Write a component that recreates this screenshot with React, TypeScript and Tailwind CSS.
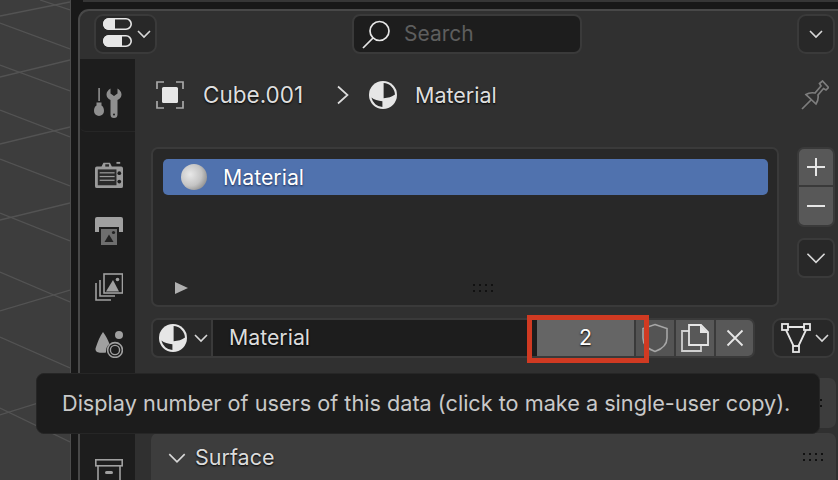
const falling = [[40,0,70,10],[0,23,70,49],[0,65,70,91],[0,110,70,137],[0,159,70,186],[0,213,70,241],[0,272,70,302],[0,337,70,368],[0,408,70,442]];
const rising = [[0,16,70,2],[0,77,70,60],[0,144,70,127],[0,220,70,203],[0,311,70,290],[0,415,70,393]];

function Viewport() {
  return (
    <div className="w-[71px] h-full shrink-0 bg-[#3d3d3d] border-r border-[#4c4c4c]">
      <svg width="70" height="480" viewBox="0 0 70 480" className="block">
        {[...falling, ...rising].map(([a, b, c, d], i) => (
          <line key={i} x1={a} y1={b} x2={c} y2={d} stroke="#535353" strokeWidth="1.3" />
        ))}
      </svg>
    </div>
  );
}

function Chevron({ size = 14, color = "#d8d8d8", width = 1.6 }: { size?: number; color?: string; width?: number }) {
  return (
    <svg width={size} height={size} viewBox="0 0 14 14" fill="none" className="shrink-0">
      <path d="M1 4l6 6 6-6" stroke={color} strokeWidth={width * 14 / size} />
    </svg>
  );
}

function MaterialIcon({ size = 28 }: { size?: number }) {
  return (
    <svg width={size} height={size} viewBox="0 0 28 28" className="block shrink-0">
      <circle cx="14" cy="14" r="14" fill="#e6e6e6" />
      <path d="M14.6 2.1A12 12 0 0 1 26 13.6C23 16 19 17 14.6 17.3Z" fill="#2a2a2a" />
      <path d="M13.4 20.3C9 20 5 18.6 2.4 16.6A12 12 0 0 0 13.4 26Z" fill="#2a2a2a" />
    </svg>
  );
}

function ToolsIcon() {
  return (
    <svg width="30" height="30" viewBox="0 0 30 30" fill="#8f8f8f" className="block">
      <rect x="4.3" y="0" width="1.6" height="13" />
      <path d="M2.5 14.5H7.5V17.5C9 18.5 10 20 10 23A5 5 0 0 1 0 23C0 20 1 18.5 2.5 17.5Z" />
      <path d="M17 .5V5.5L20.5 8 24 5.5V.5C26.5 2 28 4 28 6.5 28 9 26.5 11 24 12V26.5A3.5 3.5 0 0 1 17 26.5V12C14.5 11 13 9 13 6.5 13 4 14.5 2 17 .5Z" transform="translate(-.5 0)" />
      <circle cx="20" cy="26.5" r="1" fill="#1d1d1d" />
    </svg>
  );
}

function RenderIcon() {
  return (
    <svg width="28" height="28" viewBox="0 0 30 28" fill="#9a9a9a" className="block">
      <rect x="23" y="0" width="4" height="2" />
      <path d="M2 5H7L9 1H16L18 5H28A2 2 0 0 1 30 7V26A2 2 0 0 1 28 28H2A2 2 0 0 1 0 26V7A2 2 0 0 1 2 5Z" />
      <rect x="11" y="2.5" width="4" height="2.5" fill="#2a2a2a" />
      <rect x="3" y="8" width="20" height="17" fill="#2a2a2a" />
      <g fill="#9a9a9a"><rect x="5" y="11" width="16" height="1.3" /><rect x="5" y="15" width="16" height="1.3" /><rect x="5" y="19" width="16" height="1.3" /></g>
      <circle cx="26" cy="12" r="2" fill="#1d1d1d" />
      <circle cx="26" cy="21" r="2" fill="#1d1d1d" />
    </svg>
  );
}

function OutputIcon() {
  return (
    <svg width="28" height="28" viewBox="0 0 28 28" className="block">
      <path d="M2 0H26A2 2 0 0 1 28 2V15H24V10H4V15H0V2A2 2 0 0 1 2 0Z" fill="#a0a0a0" />
      <rect x="6" y="12" width="16" height="16" fill="#6e6e6e" />
      <path d="M9.5 25L14 17.5 18.5 25Z" fill="#222" />
      <circle cx="18.5" cy="15.5" r="1.6" fill="#222" />
    </svg>
  );
}

function ImageIcon() {
  return (
    <svg width="28" height="28" viewBox="0 0 28 28" fill="none" className="block">
      <rect x="9" y="1" width="18.5" height="19" fill="#1d1d1d" stroke="#a0a0a0" strokeWidth="1.6" />
      <path d="M11 18.5L18 7 24 18.5Z" fill="#a0a0a0" />
      <circle cx="22.5" cy="6.5" r="1.8" fill="#a0a0a0" />
      <path d="M5 7V23H20" stroke="#a0a0a0" strokeWidth="1.6" />
      <path d="M1 10V27H16" stroke="#a0a0a0" strokeWidth="1.6" />
    </svg>
  );
}

function ShapesIcon() {
  return (
    <svg width="28" height="29" viewBox="0 0 28 29" fill="none" className="block">
      <circle cx="24" cy="6" r="4" fill="#a0a0a0" />
      <path d="M8 3C11 7 13 11 14.5 15 12 17 11 19 11 23.5 9 24 5 24 2 23 .5 22 0 20 1 18 3 12 5 7 8 3Z" fill="#a0a0a0" />
      <circle cx="20" cy="21" r="7.4" stroke="#a0a0a0" strokeWidth="1.6" />
      <circle cx="20" cy="21" r="4.6" stroke="#a0a0a0" strokeWidth="1.4" />
    </svg>
  );
}

function ArchiveIcon() {
  return (
    <svg width="28" height="24" viewBox="0 0 28 24" fill="none" stroke="#a0a0a0" strokeWidth="1.6" className="block">
      <rect x=".8" y=".8" width="26.4" height="6" />
      <path d="M3 7V24M25 7V24" />
      <rect x="10" y="12" width="8" height="3" rx="1.5" fill="#a0a0a0" stroke="none" />
    </svg>
  );
}

function SideTab({ children, className }: { children: React.ReactNode; className: string }) {
  return <div className={`flex justify-center items-center shrink-0 ${className}`}>{children}</div>;
}

function Sidebar() {
  return (
    <div className="w-[55px] shrink-0 bg-[#1d1d1d] flex flex-col">
      <SideTab className="h-[73px] pl-[3px] pt-[15px] border-b border-[#262626] rounded-bl-[6px]">
        <ToolsIcon />
      </SideTab>
      <SideTab className="mt-[29px] h-[28px] pl-[2px]"><RenderIcon /></SideTab>
      <SideTab className="mt-[28px] h-[28px] pl-[2px]"><OutputIcon /></SideTab>
      <SideTab className="mt-[28px] h-[28px] pl-[2px]"><ImageIcon /></SideTab>
      <SideTab className="mt-[28px] h-[29px] pl-[2px]"><ShapesIcon /></SideTab>
      <SideTab className="mt-[101px] h-[24px] pl-[2px]"><ArchiveIcon /></SideTab>
    </div>
  );
}

function Grip({ className = "" }: { className?: string }) {
  return (
    <div className={`grid grid-cols-4 gap-x-[4px] gap-y-[4px] w-[20px] shrink-0 ${className}`}>
      {Array.from({ length: 8 }).map((_, i) => (
        <span key={i} className="w-[2px] h-[2px] bg-[#111111]" />
      ))}
    </div>
  );
}

function ListBox() {
  return (
    <div className="flex-1 h-[160px] rounded-[7px] border-2 border-[#3a3a3a] bg-[#282828] pl-[10px] pr-[9px] pt-[10px] flex flex-col">
      <div className="h-[36px] shrink-0 rounded-[5px] bg-[#5072ae] flex items-center pl-[18px]">
        <div className="w-[26px] h-[26px] rounded-full bg-[radial-gradient(circle_at_35%_40%,#e8e8e8_0%,#c4c4c4_50%,#6a6a6a_100%)]" />
        <span className="ml-[16px] pt-[1px] text-[21.3px] text-white [text-shadow:0_1px_2px_#1a2a50]">Material</span>
      </div>
      <div className="mt-auto mb-[11px] flex items-center relative h-[12px]">
        <svg width="13" height="12" viewBox="0 0 13 12" className="ml-[12px]"><path d="M0 0L13 6 0 12Z" fill="#b0b0b0" /></svg>
        <Grip className="ml-[285px]" />
      </div>
    </div>
  );
}

function SideButtons() {
  return (
    <div className="w-[38px] ml-[18px] shrink-0 flex flex-col">
      <div className="h-[80px] rounded-[7px] border-2 border-[#3a3a3a] bg-[#585858] flex flex-col">
        <div className="h-[38px] flex items-center justify-center border-b-2 border-[#3a3a3a]">
          <svg width="20" height="20" viewBox="0 0 20 20"><path d="M10 1V19M1 10H19" stroke="#e6e6e6" strokeWidth="2" /></svg>
        </div>
        <div className="flex-1 flex items-center justify-center">
          <svg width="20" height="4" viewBox="0 0 20 4"><path d="M1 2H19" stroke="#e6e6e6" strokeWidth="2" /></svg>
        </div>
      </div>
      <div className="mt-[11px] h-[40px] rounded-[7px] border-2 border-[#3a3a3a] bg-[#282828] flex items-center justify-center">
        <Chevron size={20} width={1.6} />
      </div>
    </div>
  );
}

function MaterialRow() {
  return (
    <div className="flex h-[40px] shrink-0 mt-[11px] mr-[3px] text-[#dcdcdc]">
      <div className="w-[62px] shrink-0 rounded-l-[7px] border-2 border-[#3a3a3a] bg-[#282828] flex items-center pl-[6px] gap-[7px]">
        <MaterialIcon />
        <Chevron size={14} />
      </div>
      <div className="w-[324px] shrink-0 bg-[#1d1d1d] border-y-2 border-[#3a3a3a] flex items-center pl-[16px] text-[21.3px] [text-shadow:0_1px_2px_#000]">
        Material
      </div>
      <div className="w-[97px] shrink-0 relative bg-[#656565] border-y-2 border-[#3a3a3a] flex items-center justify-center text-[21.3px] text-white [text-shadow:0_1px_2px_#000]">
        2
        <div className="absolute left-[-10px] top-[-5px] w-[122px] h-[48px] border-[5px] border-[#d03a22]" />
      </div>
      <div className="w-[2px] shrink-0 bg-[#3a3a3a]" />
      <div className="w-[38px] shrink-0 bg-[#545454] border-y-2 border-[#3a3a3a] flex items-center justify-center">
        <svg width="28" height="30" viewBox="0 0 28 30" fill="none" stroke="#a6a6a6" strokeWidth="1.6">
          <path d="M14 1.5L26 5.5V15C26 21 21 26 14 28.5 7 26 2 21 2 15V5.5Z" />
        </svg>
      </div>
      <div className="w-[2px] shrink-0 bg-[#3a3a3a]" />
      <div className="w-[38px] shrink-0 bg-[#585858] border-y-2 border-[#3a3a3a] flex items-center justify-center">
        <svg width="30" height="30" viewBox="0 0 30 30" fill="none" stroke="#e6e6e6" strokeWidth="1.8">
          <path d="M9 8H2V28H21V22" stroke="#d0d0d0" />
          <path d="M9 2H21L28 9V22H9Z" />
          <path d="M20 2L28 10H20Z" fill="#e6e6e6" stroke="none" />
        </svg>
      </div>
      <div className="w-[2px] shrink-0 bg-[#3a3a3a]" />
      <div className="w-[39px] shrink-0 bg-[#585858] rounded-r-[7px] border-y-2 border-r-2 border-[#3a3a3a] flex items-center justify-center">
        <svg width="18" height="18" viewBox="0 0 18 18" fill="none" stroke="#e6e6e6" strokeWidth="1.8"><path d="M1.5 1.5L16.5 16.5M16.5 1.5L1.5 16.5" /></svg>
      </div>
      <div className="ml-auto w-[63px] shrink-0 rounded-[9px] border-2 border-[#3a3a3a] bg-[#282828] flex items-center pl-[7px] gap-[4px]">
        <svg width="30" height="30" viewBox="0 0 30 30" fill="none" stroke="#e6e6e6" strokeWidth="1.8" className="shrink-0">
          <path d="M6 4H24M5 7L13 24M25 7L17 24" />
          <rect x="1" y="1" width="6" height="6" />
          <rect x="23" y="1" width="6" height="6" />
          <rect x="12" y="23" width="6" height="6" />
        </svg>
        <Chevron size={14} />
      </div>
    </div>
  );
}

function Tooltip() {
  return (
    <div className="absolute left-[36px] top-[373px] w-[784px] h-[61px] rounded-[8px] bg-[#1c1c1c] border border-[#262626] flex items-center pl-[25px] text-[21.66px] text-[#c9c9c9] whitespace-nowrap">
      Display number of users of this data (click to make a single-user copy).
    </div>
  );
}

function Header() {
  return (
    <div className="h-[48px] flex items-start pt-[3px] pl-[14px] pr-[3px] shrink-0">
      <div className="w-[63px] h-[40px] rounded-[9px] border-2 border-[#3a3a3a] bg-[#282828] flex items-center pl-[7px] gap-[4px]">
        <svg width="30" height="34" viewBox="0 0 30 34" className="shrink-0">
          <rect x=".8" y="1.8" width="27.4" height="10.4" rx="5.2" fill="#282828" stroke="#e6e6e6" strokeWidth="1.6" />
          <path d="M6 1H12V13H6A6 6 0 0 1 6 1Z" fill="#e6e6e6" />
          <rect x=".8" y="18.8" width="27.4" height="10.4" rx="5.2" fill="#282828" stroke="#e6e6e6" strokeWidth="1.6" />
          <path d="M6 18H19V30H6A6 6 0 0 1 6 18Z" fill="#e6e6e6" />
        </svg>
        <Chevron size={14} />
      </div>
      <div className="ml-[195px] w-[230px] h-[40px] rounded-[8px] border-2 border-[#3a3a3a] bg-[#1d1d1d] flex items-center pl-[8px]">
        <svg width="30" height="30" viewBox="0 0 30 30" fill="none" stroke="#e6e6e6" strokeWidth="1.7" className="shrink-0">
          <circle cx="17.5" cy="12" r="9.5" />
          <path d="M11 19L1 29" />
        </svg>
        <span className="ml-[12px] text-[21px] text-[#5e5e5e]">Search</span>
      </div>
      <div className="ml-auto w-[38px] h-[40px] rounded-[9px] border-2 border-[#3a3a3a] bg-[#282828] flex items-center justify-center">
        <Chevron size={14} />
      </div>
    </div>
  );
}

function Breadcrumb() {
  return (
    <div className="h-[72px] shrink-0 flex items-center pl-[5px] pr-[9px] text-[22.5px] text-[#dedede] [text-shadow:0_1px_2px_#000]">
      <svg width="28" height="28" viewBox="0 0 28 28" fill="none" className="shrink-0">
        <path d="M8 1H1V8M20 1H27V8M1 20V27H8M27 20V27H20" stroke="#a8a8a8" strokeWidth="1.7" />
        <rect x="6" y="6" width="16" height="16" rx="1.5" fill="#e6e6e6" />
      </svg>
      <span className="ml-[19px] w-[101px]">Cube.001</span>
      <svg width="12" height="20" viewBox="0 0 12 20" fill="none" className="ml-[33px] shrink-0"><path d="M1 1.5L10.5 10 1 18.5" stroke="#dcdcdc" strokeWidth="1.7" /></svg>
      <span className="ml-[20px]"><MaterialIcon /></span>
      <span className="ml-[18px] text-[21.5px]">Material</span>
      <svg width="28" height="30" viewBox="0 0 28 30" fill="none" stroke="#7d7d7d" strokeWidth="1.7" className="ml-auto shrink-0">
        <path d="M1 29L10.5 19.5" />
        <path d="M5 14.5C8 12.5 11 12.5 14 13L20 6 18.5 3.5 21.5 1 27.5 7.5 25 10 22.5 8.5 17 15C17.5 18 17 21 15 24Z" />
      </svg>
    </div>
  );
}

export default function App() {
  return (
    <div className="w-[838px] h-[480px] relative overflow-hidden flex bg-[#181818] font-['Inter',sans-serif]">
      <Viewport />
      <div className="flex-1 min-w-0 flex flex-col">
        <div className="h-[2px] ml-[12px] bg-[#363636] shrink-0" />
        <div className="h-[7px] shrink-0" />
        <div className="flex-1 min-h-0 overflow-hidden ml-[7px] rounded-tl-[11px] border-l-2 border-t-2 border-[#484848] bg-[#303030] flex flex-col">
          <Header />
          <div className="flex-1 min-h-0 flex">
            <Sidebar />
            <div className="flex-1 min-w-0 pl-[16px] flex flex-col">
              <Breadcrumb />
              <div className="flex shrink-0 mt-[16px] pr-[3px]">
                <ListBox />
                <SideButtons />
              </div>
              <MaterialRow />
              <div className="mt-[20px] mr-[2px] h-[50px] rounded-[7px] bg-[#3d3d3d] shrink-0 flex justify-end items-center pr-[14px]">
                <Grip />
              </div>
              <div className="mt-[5px] mr-[2px] h-[60px] rounded-t-[7px] bg-[#3d3d3d] shrink-0 flex items-start pt-[8px] pl-[17px] text-[21.5px] text-[#dcdcdc] [text-shadow:0_1px_2px_#000]">
                <span className="mt-[8px]"><Chevron size={18} /></span>
                <span className="ml-[9px]">Surface</span>
                <Grip className="ml-auto mr-[13px] mt-[12px]" />
              </div>
            </div>
          </div>
        </div>
      </div>
      <Tooltip />
    </div>
  );
}
